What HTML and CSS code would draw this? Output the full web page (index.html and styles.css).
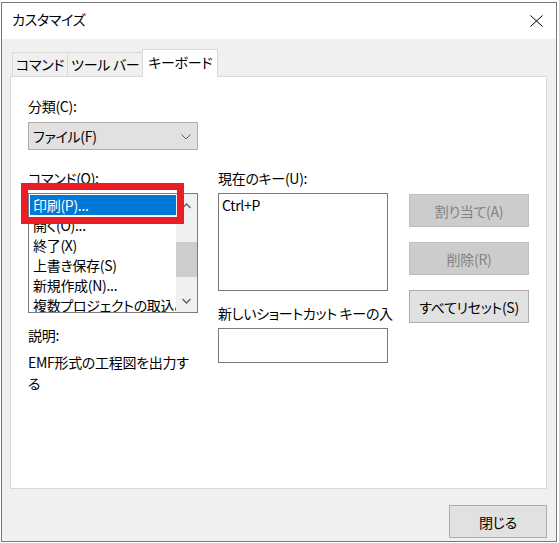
FILE: index.html
```html
<!DOCTYPE html>
<html>
<head>
  <meta charset="UTF-8">
  <title>カスタマイズ</title>
  <link rel="stylesheet" href="styles.css">
</head>
<body>

  <div class="window">
    <div class="titlebar">
      <span class="title">カスタマイズ</span>
      <svg class="close-x" width="13" height="12" viewBox="0 0 13 12">
        <path d="M0.5 0.5 L12.5 11.5 M12.5 0.5 L0.5 11.5" stroke="#000" stroke-width="1" fill="none" />
      </svg>
    </div>

    <div class="client">
      <div class="tabs">
        <div class="tab">コマンド</div>
        <div class="tab">ツール バー</div>
        <div class="tab active">キーボード</div>
      </div>

      <div class="panel">
        <div class="category">
          <label class="field-label">分類(C):</label>
          <div class="combo">
            <span>ファイル(F)</span>
            <svg width="10" height="6" viewBox="0 0 10 6">
              <polyline points="0.5,0.5 5,5 9.5,0.5" stroke="#606060" stroke-width="1" fill="none" />
            </svg>
          </div>
        </div>

        <div class="columns">
          <div class="col col-cmd">
            <label class="field-label">コマンド(O):</label>
            <div class="listbox">
              <ul class="items">
                <li class="selected">印刷(P)...</li>
                <li>開く(O)...</li>
                <li>終了(X)</li>
                <li>上書き保存(S)</li>
                <li>新規作成(N)...</li>
                <li>複数プロジェクトの取込み(I)...</li>
              </ul>
              <div class="scrollbar">
                <svg class="arrow" width="9" height="6" viewBox="0 0 9 6">
                  <polyline points="0.5,5 4.5,1 8.5,5" stroke="#606060" stroke-width="1.4" fill="none" />
                </svg>
                <div class="thumb"></div>
                <svg class="arrow arrow-down" width="9" height="6" viewBox="0 0 9 6">
                  <polyline points="0.5,1 4.5,5 8.5,1" stroke="#606060" stroke-width="1.4" fill="none" />
                </svg>
              </div>
            </div>
            <div class="desc-label">説明:</div>
            <p class="desc">EMF形式の工程図を出力する</p>
            <div class="highlight"></div>
          </div>

          <div class="col col-keys">
            <label class="field-label">現在のキー(U):</label>
            <div class="keybox">Ctrl+P</div>
            <label class="field-label clip">新しいショートカット キーの入力(N):</label>
            <div class="keyinput"></div>
          </div>

          <div class="col col-buttons">
            <button type="button" class="btn" disabled>割り当て(A)</button>
            <button type="button" class="btn" disabled>削除(R)</button>
            <button type="button" class="btn">すべてリセット(S)</button>
          </div>
        </div>
      </div>

      <div class="footer">
        <button type="button" class="btn close-btn">閉じる</button>
      </div>
    </div>
  </div>

</body>
</html>
```

FILE: styles.css
```css
body {
  margin: 0;
  padding: 2px 0 0 1px;
  background-color: #fff;
  font-family: "Noto Sans CJK JP", "Noto Sans", sans-serif;
  font-feature-settings: "palt";
  font-size: 14px;
  letter-spacing: -0.3px;
  line-height: 20px;
  color: #000;
}

.window {
  width: 556px;
  height: 540px;
  box-sizing: border-box;
  border: 1px solid #777;
  display: flex;
  flex-direction: column;
}

.titlebar {
  height: 36px;
  flex: none;
  background-color: #fff;
  display: flex;
  align-items: center;
  justify-content: space-between;
  padding: 0 13px 0 10px;
}

.title {
  margin-bottom: 4px;
}

.client {
  flex: 1;
  background-color: #f0f0f0;
  padding: 10px 9px 0 8px;
}

.tabs {
  display: flex;
  align-items: flex-end;
  padding-left: 2px;
}

.tab {
  height: 24px;
  box-sizing: border-box;
  padding: 1px 3px 0;
  border: 1px solid #d9d9d9;
  border-bottom: none;
  background-color: #f0f0f0;
  white-space: nowrap;
}

.tab + .tab {
  margin-left: -1px;
}

.tab.active {
  height: 28px;
  margin-bottom: -1px;
  padding: 2px 5px 0;
  background-color: #fff;
  position: relative;
}

.panel {
  height: 413px;
  box-sizing: border-box;
  border: 1px solid #d9d9d9;
  background-color: #fff;
  padding: 19px 0 0 17px;
}

.field-label {
  display: block;
}

.combo {
  width: 170px;
  height: 28px;
  box-sizing: border-box;
  margin-top: 6px;
  border: 1px solid #adadad;
  background-color: #e1e1e1;
  display: flex;
  align-items: center;
  justify-content: space-between;
  padding: 0 6px 0 4px;
}

.combo svg {
  margin-top: 1px;
}

.columns {
  display: flex;
  align-items: flex-start;
  margin-top: 18px;
}

.col {
  width: 170px;
}

.col-cmd {
  position: relative;
  margin-right: 20px;
}

.col-keys {
  margin-right: 21px;
}

.listbox {
  height: 120px;
  box-sizing: border-box;
  margin-top: 5px;
  border: 1px solid #7a7a7a;
  display: flex;
  overflow: hidden;
}

.items {
  flex: 1;
  min-width: 0;
  list-style: none;
  margin: 0;
  padding: 1px 0 0 1px;
}

.items li {
  height: 20px;
  padding-left: 3px;
  white-space: nowrap;
  overflow: hidden;
}

.items li.selected {
  background-color: #0078d7;
  color: #fff;
}

.scrollbar {
  width: 21px;
  flex: none;
  background-color: #f0f0f0;
  display: flex;
  flex-direction: column;
  align-items: center;
}

.arrow {
  margin-top: 9px;
}

.thumb {
  width: 100%;
  height: 35px;
  margin-top: 33px;
  background-color: #cdcdcd;
}

.arrow-down {
  margin-top: 21px;
}

.desc-label {
  margin-top: 12px;
}

.desc {
  margin: 7px 0 0;
  line-height: 21px;
}

.highlight {
  position: absolute;
  left: -7px;
  top: 15px;
  width: 163px;
  height: 41px;
  box-sizing: border-box;
  border: 7px solid #ec1c24;
}

.keybox {
  height: 98px;
  box-sizing: border-box;
  margin-top: 5px;
  border: 1px solid #7a7a7a;
  padding: 1px 3px;
}

.clip {
  width: 176px;
  height: 20px;
  overflow: hidden;
  margin-top: 12px;
}

.keyinput {
  height: 35px;
  box-sizing: border-box;
  margin-top: 5px;
  border: 1px solid #7a7a7a;
}

.col-buttons {
  width: 120px;
  display: flex;
  flex-direction: column;
  gap: 15px;
  margin-top: 26px;
}

.btn {
  height: 33px;
  box-sizing: border-box;
  border: 1px solid #adadad;
  background-color: #e1e1e1;
  font: inherit;
  letter-spacing: inherit;
  color: #000;
  padding: 0;
}

.btn:disabled {
  background-color: #cccccc;
  border-color: #bfbfbf;
  color: #838383;
}

.footer {
  display: flex;
  justify-content: flex-end;
  padding-top: 16px;
}

.close-btn {
  width: 98px;
}
```
